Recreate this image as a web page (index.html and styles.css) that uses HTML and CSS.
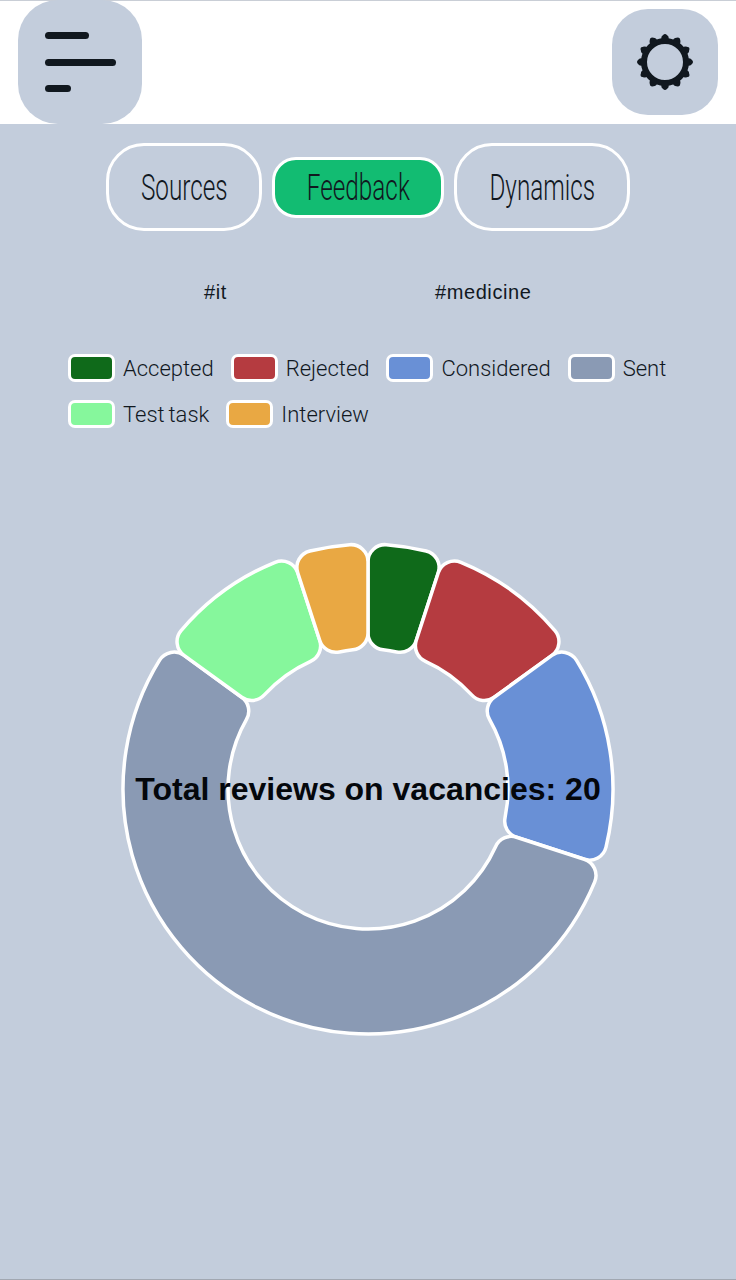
FILE: index.html
```html
<!DOCTYPE html>
<html lang="en">
<head>
    <meta charset="UTF-8" />
    <meta name="viewport" content="width=device-width, initial-scale=1.0" />
    <title>Statistics</title>
    <link rel="stylesheet" href="styles.css">
</head>
<body>
    <header class="topbar">
        <button class="menu-btn" aria-label="Menu">
            <span class="menu-line line-mid"></span>
            <span class="menu-line line-long"></span>
            <span class="menu-line line-short"></span>
        </button>
        <button class="settings-btn" aria-label="Settings">
            <svg class="gear" viewBox="0 0 60 60" width="60" height="60" fill="none" stroke="#11181f">
                <circle cx="30" cy="30" r="21" stroke-width="6"/>
                <circle cx="30" cy="30" r="23.5" stroke-width="7.5" pathLength="12" stroke-dasharray="0 1" stroke-linecap="round"/>
                <circle cx="30" cy="30" r="26" stroke-width="4" pathLength="12" stroke-dasharray="0 1" stroke-linecap="round"/>
            </svg>
        </button>
    </header>

    <nav class="tabs">
        <button class="tab"><span class="tab-text">Sources</span></button>
        <button class="tab tab-active"><span class="tab-text">Feedback</span></button>
        <button class="tab tab-wide"><span class="tab-text">Dynamics</span></button>
    </nav>

    <div class="tags">
        <span class="tag">#it</span>
        <span class="tag">#medicine</span>
    </div>

    <ul class="legend">
        <li class="legend-item"><i class="swatch accepted"></i>Accepted</li>
        <li class="legend-item"><i class="swatch rejected"></i>Rejected</li>
        <li class="legend-item"><i class="swatch considered"></i>Considered</li>
        <li class="legend-item"><i class="swatch sent"></i>Sent</li>
        <li class="legend-item"><i class="swatch test-task"></i>Test task</li>
        <li class="legend-item"><i class="swatch interview"></i>Interview</li>
    </ul>

    <div class="chart">
        <svg id="donut" viewBox="0 0 500 500" width="500" height="500"></svg>
        <div class="chart-total">Total reviews on vacancies: 20</div>
    </div>

    <script src="script.js"></script>
</body>
</html>
```

FILE: styles.css
```css
* {
    box-sizing: border-box;
}

html, body {
    height: 100%;
}

body {
    margin: 0;
    background-color: #c3cddc;
    border-bottom: 1px solid #a1a7b1;
    color: #11181f;
    font-family: Roboto, 'Liberation Sans', sans-serif;
    overflow: hidden;
}

button {
    border: none;
    padding: 0;
    font: inherit;
    color: inherit;
}

.topbar {
    height: 124px;
    padding: 0 18px;
    background-color: #ffffff;
    border-top: 1px solid #c9ced6;
    display: flex;
    justify-content: space-between;
}

.menu-btn {
    width: 124px;
    height: 124px;
    margin-top: -1px;
    padding: 32px 27px;
    background-color: #c3cddc;
    border-radius: 40px;
    display: flex;
    flex-direction: column;
    justify-content: space-between;
    align-items: flex-start;
}

.menu-line {
    display: block;
    height: 7px;
    background-color: #11181f;
    border-radius: 4px;
}

.line-mid { width: 44px; }
.line-long { width: 71px; }
.line-short { width: 26px; }

.settings-btn {
    width: 106px;
    height: 106px;
    margin-top: 8px;
    background-color: #c3cddc;
    border-radius: 36px;
    display: flex;
    align-items: center;
    justify-content: center;
}

.tabs {
    margin-top: 19px;
    height: 88px;
    display: flex;
    justify-content: center;
    align-items: center;
    gap: 10px;
}

.tab {
    width: 156px;
    height: 88px;
    padding-top: 2px;
    background: transparent;
    border: 3.5px solid #ffffff;
    border-radius: 38px;
    font-size: 36px;
    font-weight: 300;
    display: flex;
    align-items: center;
    justify-content: center;
}

.tab-wide {
    width: 176px;
}

.tab-active {
    width: 172px;
    height: 61px;
    background-color: #12bc72;
    border-radius: 24px;
}

/* no condensed face installed, so squeeze the regular one */
.tab-text {
    display: inline-block;
    transform: scaleX(0.675);
    white-space: nowrap;
}

.tags {
    margin-top: 47px;
    display: flex;
    font-size: 20px;
    line-height: 28px;
}

.tag {
    font-family: 'Liberation Sans', sans-serif;
    letter-spacing: 0.6px;
}

.tag:first-child {
    margin-left: 204px;
}

.tag:last-child {
    margin-left: 208px;
}

.legend {
    list-style: none;
    margin: 48px 0 0;
    padding: 0 60px 0 68px;
    display: flex;
    flex-wrap: wrap;
    gap: 18px 17px;
    font-size: 22px;
    font-weight: 300;
    word-spacing: -1.5px;
}

.legend-item {
    height: 28px;
    display: flex;
    align-items: center;
    gap: 8px;
}

.swatch {
    width: 47px;
    height: 28px;
    border: 3px solid #ffffff;
    border-radius: 7px;
}

.accepted { background-color: #0f6a1a; }
.rejected { background-color: #b53b40; }
.considered { background-color: #6990d6; }
.sent { background-color: #8a9ab4; }
.test-task { background-color: #86f79c; }
.interview { background-color: #e9a843; }

.chart {
    position: relative;
    margin-top: 111px;
    height: 500px;
    display: flex;
    justify-content: center;
}

.chart-total {
    position: absolute;
    left: 0;
    right: 0;
    top: 250px;
    transform: translateY(-50%);
    text-align: center;
    font-family: 'Liberation Sans', sans-serif;
    font-size: 32px;
    font-weight: bold;
    color: #04070c;
}
```

FILE: script.js
```js
// feedback counts, drawn clockwise from the top of the ring
const slices = [
    { count: 1, color: "#0f6a1a" },
    { count: 2, color: "#b53b40" },
    { count: 3, color: "#6990d6" },
    { count: 11, color: "#8a9ab4" },
    { count: 2, color: "#86f79c" },
    { count: 1, color: "#e9a843" }
];

const CX = 250, CY = 250;
const OUTER = 245, INNER = 140, CORNER = 17;

function point(radius, angle) {
    const x = CX + radius * Math.sin(angle);
    const y = CY - radius * Math.cos(angle);
    return `${x.toFixed(2)} ${y.toFixed(2)}`;
}

// ring segment with its four corners rounded
function slicePath(start, end) {
    const outerAngle = Math.asin(CORNER / (OUTER - CORNER));
    const innerAngle = Math.asin(CORNER / (INNER + CORNER));
    const outerEdge = (OUTER - CORNER) * Math.cos(outerAngle);
    const innerEdge = (INNER + CORNER) * Math.cos(innerAngle);
    const c = `A${CORNER} ${CORNER} 0 0 1`;
    const large = end - start > Math.PI ? 1 : 0;

    return [
        `M${point(outerEdge, start)}`,
        `${c} ${point(OUTER, start + outerAngle)}`,
        `A${OUTER} ${OUTER} 0 ${large} 1 ${point(OUTER, end - outerAngle)}`,
        `${c} ${point(outerEdge, end)}`,
        `L${point(innerEdge, end)}`,
        `${c} ${point(INNER, end - innerAngle)}`,
        `A${INNER} ${INNER} 0 ${large} 0 ${point(INNER, start + innerAngle)}`,
        `${c} ${point(innerEdge, start)}`,
        "Z"
    ].join(" ");
}

const donut = document.getElementById("donut");
const total = slices.reduce((sum, s) => sum + s.count, 0);
let angle = 0;

slices.forEach(s => {
    const next = angle + (s.count / total) * Math.PI * 2;
    const path = document.createElementNS("http://www.w3.org/2000/svg", "path");
    path.setAttribute("d", slicePath(angle, next));
    path.setAttribute("fill", s.color);
    path.setAttribute("stroke", "#ffffff");
    path.setAttribute("stroke-width", "3.5");
    donut.appendChild(path);
    angle = next;
});
```
